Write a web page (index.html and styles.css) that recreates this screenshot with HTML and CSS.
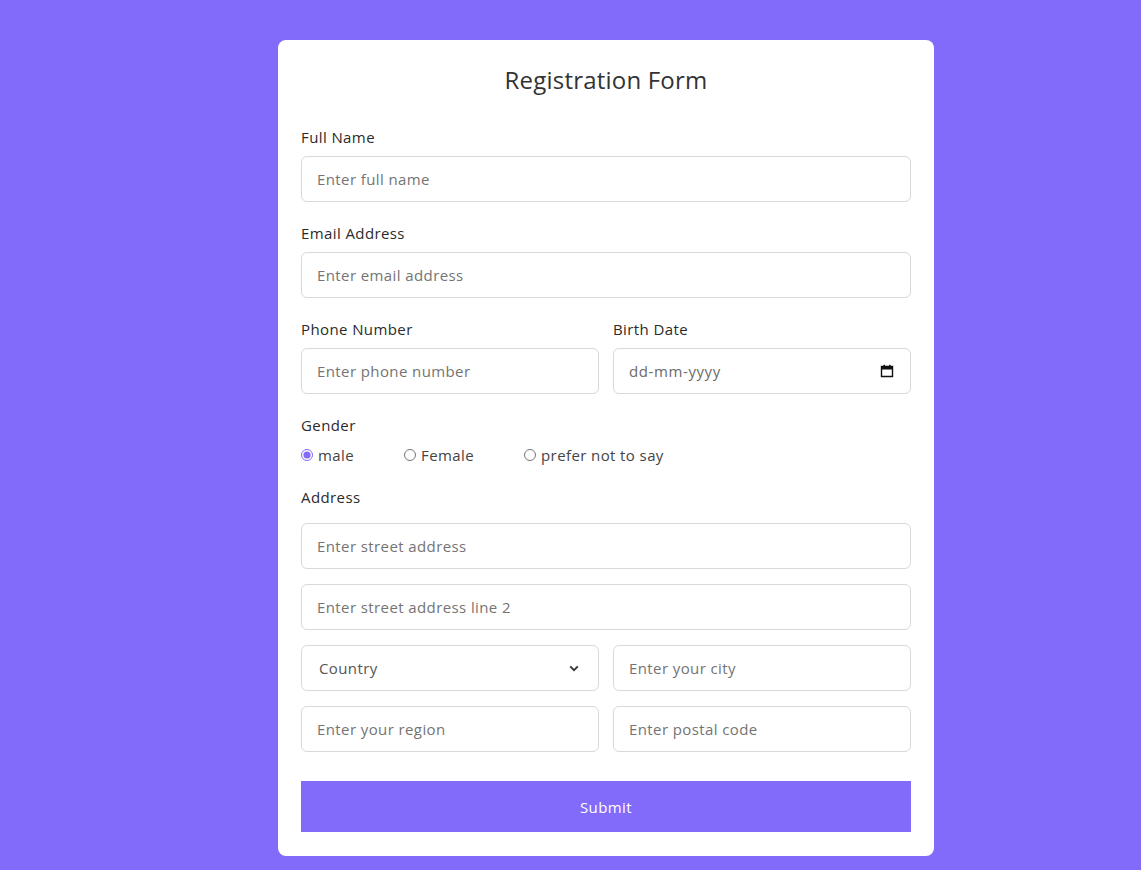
FILE: index.html
```html
<!DOCTYPE html>
<html lang="en">
<head>
<meta charset="utf-8">
<title>Registration Form</title>
<link rel="stylesheet" href="styles.css">
</head>
<body>
<div class="card">
  <h1 class="title">Registration Form</h1>
  <form class="form">
    <div class="field">
      <label class="label">Full Name</label>
      <input class="input" type="text" placeholder="Enter full name">
    </div>
    <div class="field">
      <label class="label">Email Address</label>
      <input class="input" type="text" placeholder="Enter email address">
    </div>
    <div class="row field">
      <div class="col">
        <label class="label">Phone Number</label>
        <input class="input" type="text" placeholder="Enter phone number">
      </div>
      <div class="col">
        <label class="label">Birth Date</label>
        <div class="input date">
          <span class="date-text">dd-mm-yyyy</span>
          <svg class="cal" width="14" height="14" viewBox="0 0 14 14"><path d="M1.5 2.5h11v10h-11z" fill="none" stroke="#111" stroke-width="1.4"/><rect x="1.5" y="2.5" width="11" height="3" fill="#111"/><rect x="3.5" y="0.8" width="1.5" height="2.5" fill="#111"/><rect x="9" y="0.8" width="1.5" height="2.5" fill="#111"/></svg>
        </div>
      </div>
    </div>
    <div class="field gender">
      <label class="label">Gender</label>
      <div class="radios">
        <label class="radio"><input type="radio" name="g" checked> male</label>
        <label class="radio"><input type="radio" name="g"> Female</label>
        <label class="radio"><input type="radio" name="g"> prefer not to say</label>
      </div>
    </div>
    <div class="address">
      <label class="label addr-label">Address</label>
      <input class="input" type="text" placeholder="Enter street address">
      <input class="input" type="text" placeholder="Enter street address line 2">
      <div class="row">
        <div class="col select-wrap">
          <select class="input select"><option>Country</option></select>
          <svg class="chev" width="10" height="7" viewBox="0 0 10 7"><path d="M1.2 1.4L5 5.2l3.8-3.8" fill="none" stroke="#333" stroke-width="1.8"/></svg>
        </div>
        <div class="col"><input class="input" type="text" placeholder="Enter your city"></div>
      </div>
      <div class="row">
        <div class="col"><input class="input" type="text" placeholder="Enter your region"></div>
        <div class="col"><input class="input" type="text" placeholder="Enter postal code"></div>
      </div>
    </div>
    <button class="submit" type="button">Submit</button>
  </form>
</div>
</body>
</html>
```
FILE: styles.css
```css
* { box-sizing: border-box; }
html, body { margin: 0; padding: 0; }
body {
  background: #826afb;
  font-family: "Open Sans", "Noto Sans", sans-serif;
  color: #333;
  min-height: 870px;
  padding-top: 40px;
}
.card {
  width: 656px;
  margin: 0 0 0 278px;
  background: #fff;
  border-radius: 8px;
  padding: 22px 23px 24px;
}
.title {
  margin: 0 0 29px;
  font-size: 24px;
  line-height: 36px;
  font-weight: 500;
  letter-spacing: 0.2px;
  text-align: center;
  color: #333;
}
.form { display: flex; flex-direction: column; }
.field { margin-bottom: 21px; }
.label {
  display: block;
  font-size: 15px;
  letter-spacing: 0.4px;
  line-height: 21px;
  margin-bottom: 8px;
  color: #2b2b2b;
}
.input {
  display: block;
  width: 100%;
  height: 46px;
  border: 1px solid #d9d9d9;
  border-radius: 6px;
  padding: 0 15px;
  font-family: inherit;
  font-size: 15px;
  letter-spacing: 0.4px;
  color: #333;
  background: #fff;
  outline: none;
}
.input::placeholder { color: #747474; }
.row { display: flex; gap: 14px; }
.col { flex: 1; min-width: 0; }
.date { display: flex; align-items: center; justify-content: space-between; }
.date-text { color: #6b6b6b; font-size: 15px; letter-spacing: 0.6px; }
.cal { margin-right: 1px; }
.gender { margin-bottom: 21px; }
.radios { display: flex; gap: 50px; height: 22px; align-items: center; }
.radio {
  display: flex;
  align-items: center;
  font-size: 15px;
  letter-spacing: 0.4px;
  color: #444;
  gap: 5px;
}
.radio input {
  margin: 0;
  width: 12px;
  height: 12px;
  accent-color: #826afb;
}
.address { display: flex; flex-direction: column; gap: 15px; }
.addr-label { margin-bottom: 0; }
.select-wrap { position: relative; }
.select {
  appearance: none;
  -webkit-appearance: none;
  padding-left: 17px;
  color: #555;
}
.chev { position: absolute; right: 20px; top: 20px; }
.submit {
  margin-top: 29px;
  height: 51px;
  border: none;
  background: #826afb;
  color: #fff;
  font-family: inherit;
  font-size: 15px;
  letter-spacing: 0.4px;
  cursor: pointer;
}
```
